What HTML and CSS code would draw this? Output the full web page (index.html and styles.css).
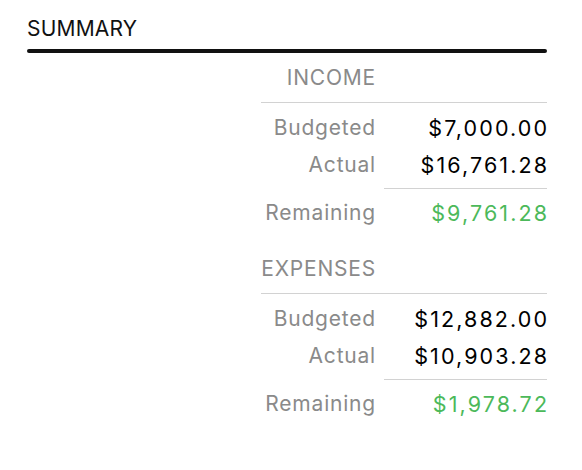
FILE: index.html
```html
<!DOCTYPE html>
<html>
<head>
<meta charset="utf-8">
<link rel="stylesheet" href="styles.css">
</head>
<body>
<div class="page">
  <h1 class="title">SUMMARY</h1>
  <div class="rule"></div>

  <div class="section">
    <div class="sec-head"><span class="label">INCOME</span></div>
    <div class="rows">
      <div class="row"><span class="label">Budgeted</span><span class="value">$7,000.00</span></div>
      <div class="row"><span class="label">Actual</span><span class="value">$16,761.28</span></div>
    </div>
    <div class="total-line"></div>
    <div class="row total"><span class="label">Remaining</span><span class="value green">$9,761.28</span></div>
  </div>

  <div class="section">
    <div class="sec-head"><span class="label">EXPENSES</span></div>
    <div class="rows">
      <div class="row"><span class="label">Budgeted</span><span class="value">$12,882.00</span></div>
      <div class="row"><span class="label">Actual</span><span class="value">$10,903.28</span></div>
    </div>
    <div class="total-line"></div>
    <div class="row total"><span class="label">Remaining</span><span class="value green">$1,978.72</span></div>
  </div>
</div>
</body>
</html>
```
FILE: styles.css
```css
* { box-sizing: border-box; }
html, body { margin: 0; padding: 0; background: #fff; }
body {
  font-family: Inter, "Liberation Sans", sans-serif;
  font-size: 21px;
  color: #000;
}
.page {
  padding: 16px 35px 0 27px;
  display: flex;
  flex-direction: column;
}
.title {
  margin: 0;
  font-size: 21px;
  font-weight: 400;
  line-height: 26px;
  letter-spacing: 0.2px;
  color: #111;
}
.rule {
  margin-top: 7px;
  height: 4px;
  border-radius: 2px;
  background: #111;
}
.section {
  align-self: flex-end;
  width: 286px;
  display: flex;
  flex-direction: column;
}
.sec-head {
  display: flex;
  height: 50px;
  align-items: center;
  border-bottom: 1px solid #d2d2d2;
}
.label {
  width: 115px;
  margin-right: -1px;
  text-align: right;
  color: #8a8a8a;
  flex: none;
  letter-spacing: 0.8px;
}
.rows {
  padding: 6px 0 5px;
  display: flex;
  flex-direction: column;
}
.row {
  display: flex;
  gap: 9px;
  height: 37px;
  align-items: center;
}
.value {
  flex: 1;
  text-align: right;
  font-size: 21.5px;
  letter-spacing: 2.1px;
  margin-right: -2.1px;
}
.green { color: #4cb95a; }
.total-line {
  margin-left: 123px;
  border-top: 1px solid #d2d2d2;
}
.total {
  margin-top: 5px;
}
.section + .section { margin-top: 13px; }
```
